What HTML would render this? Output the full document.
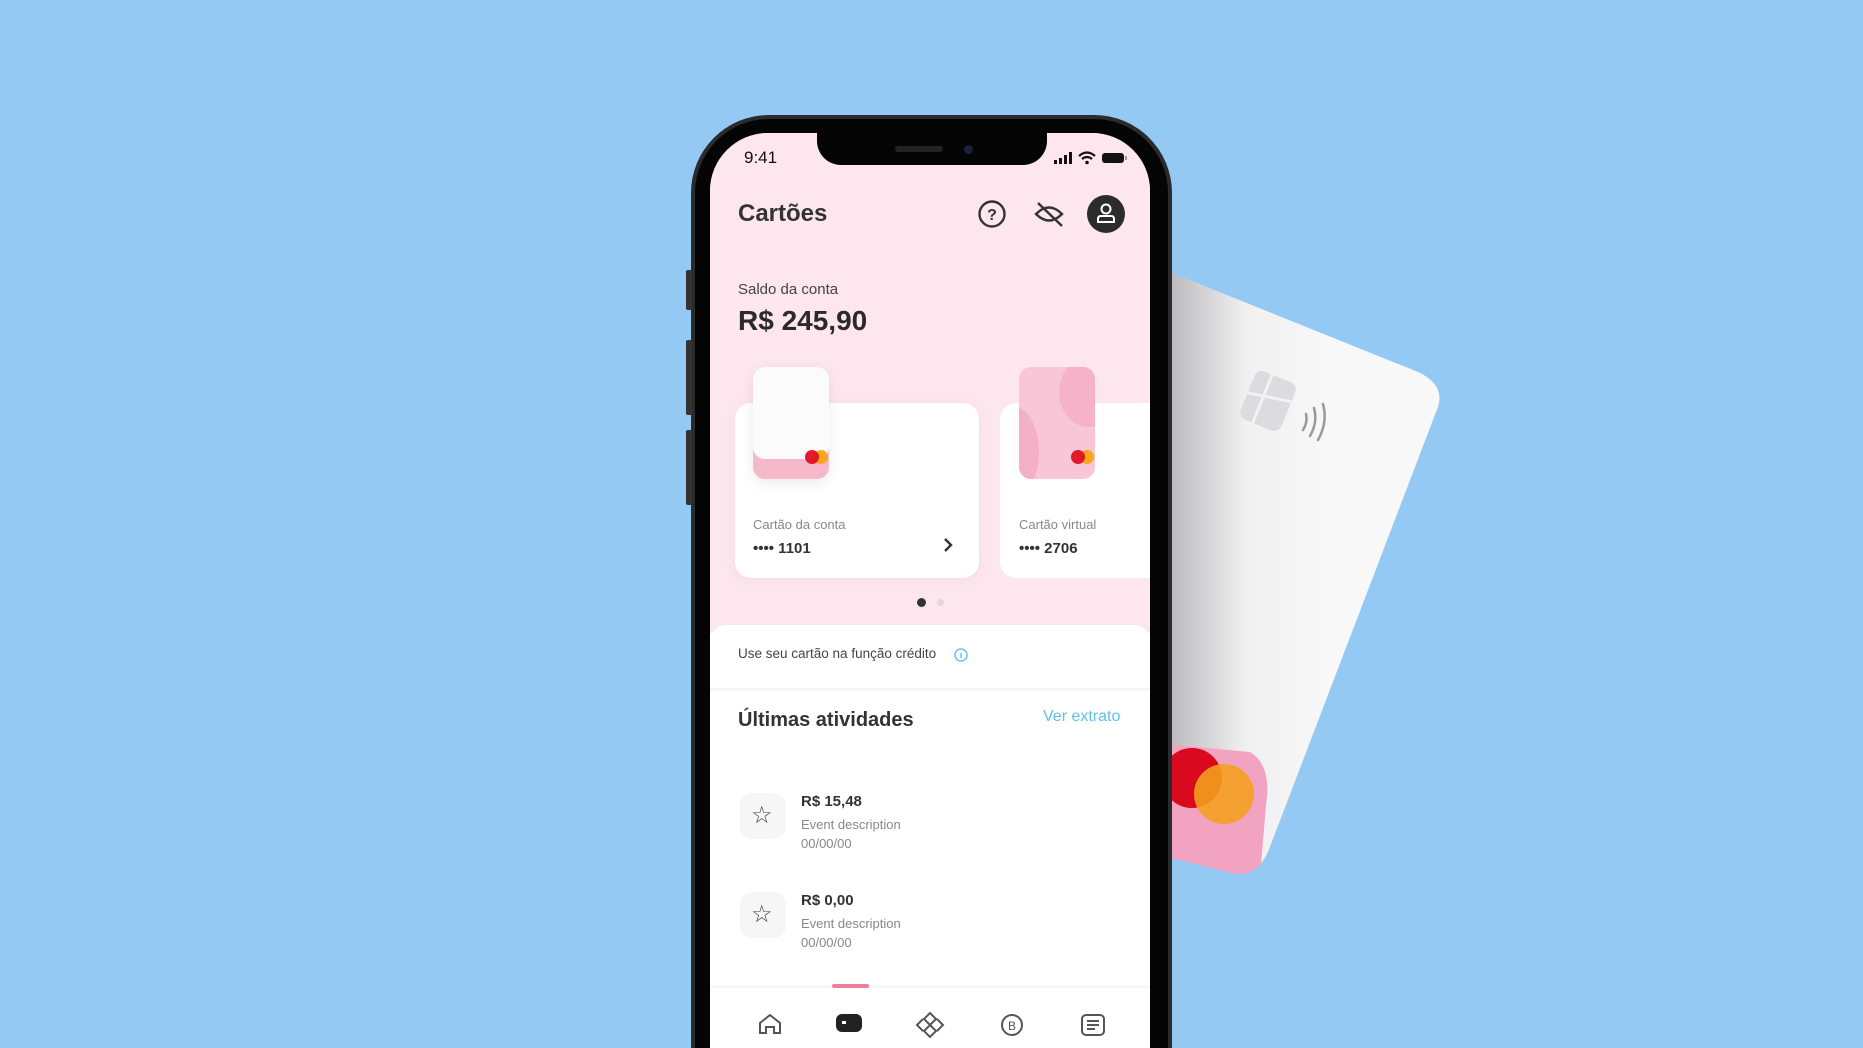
<!DOCTYPE html>
<html><head><meta charset="utf-8"><style>
*{margin:0;padding:0;box-sizing:border-box}
html,body{width:1863px;height:1048px;overflow:hidden}
body{background:#94c9f4;font-family:"Liberation Sans",sans-serif}
#w{position:relative;width:1863px;height:1048px;overflow:hidden;background:#94c9f4}
.abs{position:absolute}
.t{position:absolute;white-space:nowrap}
</style></head><body><div id="w">

<svg class="abs" style="left:0;top:0" width="1863" height="1048">
  <defs>
    <linearGradient id="g1" x1="1160" x2="1330" y1="0" y2="0" gradientUnits="userSpaceOnUse">
      <stop offset="0" stop-color="#b4b4b6"/><stop offset="0.5" stop-color="#f0f0f1"/><stop offset="1" stop-color="#f8f8f9"/>
    </linearGradient>
    <clipPath id="cc"><path d="M1120 252 L1418 372 Q1448 386 1436 412 L1268 852 Q1255 880 1228 872 L1100 840 Z"/></clipPath>
  </defs>
  <path d="M1120 252 L1418 372 Q1448 386 1436 412 L1268 852 Q1255 880 1228 872 L1100 840 Z" fill="url(#g1)"/>
  <g clip-path="url(#cc)">
    <path d="M1100 738 L1250 752 Q1272 765 1266 805 L1258 900 L1100 900 Z" fill="#f3a3c2"/>
    <circle cx="1192" cy="778" r="30" fill="#d90a1f"/>
    <circle cx="1224" cy="794" r="30" fill="#f5a11c" opacity="0.88"/>
  </g>
  <g transform="translate(1268 401) rotate(22)">
    <rect x="-22" y="-26" width="44" height="52" rx="8" fill="#dcdcde"/>
    <path d="M-22 0 L22 -8 M-6 -26 L-6 26" stroke="#f2f2f2" stroke-width="3"/>
  </g>
  <g fill="none" stroke="#999" stroke-width="2.5" stroke-linecap="round">
    <path d="M1303 430 q5 -8 3 -16"/><path d="M1310 436 q8 -14 4 -28"/><path d="M1318 440 q10 -18 5 -36"/>
  </g>
</svg>

<div class="abs" style="left:691px;top:115px;width:481px;height:1100px;border-radius:78px;background:#2b2b2d;"></div>
<div class="abs" style="left:695px;top:119px;width:473px;height:1100px;border-radius:74px;background:#050505;"></div>
<div class="abs" style="left:686px;top:270px;width:6px;height:40px;background:#333;border-radius:2px"></div>
<div class="abs" style="left:686px;top:340px;width:6px;height:75px;background:#333;border-radius:2px"></div>
<div class="abs" style="left:686px;top:430px;width:6px;height:75px;background:#333;border-radius:2px"></div>

<div class="abs" style="left:710px;top:133px;width:440px;height:1100px;border-radius:58px;overflow:hidden;background:#fff">
  <div class="abs" style="left:0;top:0;width:440px;height:500px;background:#fde6ee"></div>
  <div class="abs" style="left:107px;top:-2px;width:230px;height:34px;background:#050505;border-radius:0 0 24px 24px"></div>
  <div class="abs" style="left:185px;top:13px;width:48px;height:6px;background:#222;border-radius:3px"></div>
  <div class="abs" style="left:254px;top:12px;width:9px;height:9px;background:#1a2040;border-radius:50%"></div>
  <div class="t" style="left:34px;top:15px;font-size:17px;color:#111">9:41</div>
  <svg class="abs" style="left:342px;top:17px" width="80" height="16">
    <rect x="2" y="10" width="3" height="4" fill="#111"/><rect x="7" y="8" width="3" height="6" fill="#111"/><rect x="12" y="5" width="3" height="9" fill="#111"/><rect x="17" y="2" width="3" height="12" fill="#111"/>
    <path d="M27 6 q8 -7 16 0 M30 9 q5 -4 10 0" stroke="#111" stroke-width="2.2" fill="none"/><circle cx="35" cy="12.5" r="1.8" fill="#111"/>
    <rect x="50" y="3" width="22" height="10" rx="3" fill="#111"/><rect x="73" y="6" width="2" height="4" fill="#999"/>
  </svg>

  <div class="t" style="left:28px;top:67px;font-size:24px;font-weight:bold;color:#333">Cartões</div>
  <svg class="abs" style="left:268px;top:61px" width="160" height="44">
    <circle cx="14" cy="20" r="12.5" fill="none" stroke="#333" stroke-width="2.4"/>
    <text x="14" y="26" font-size="16" font-weight="bold" text-anchor="middle" fill="#333" font-family="Liberation Sans">?</text>
    <path d="M58 20 q13 -13 26 0 q-13 13 -26 0z" fill="none" stroke="#333" stroke-width="2.4"/>
    <path d="M60 9 L84 32" stroke="#333" stroke-width="2.4"/>
    <circle cx="128" cy="20" r="19" fill="#2c2c2e"/>
    <circle cx="128" cy="15" r="4.5" fill="none" stroke="#fff" stroke-width="2"/>
    <path d="M120 28 v-3 q0 -3 3 -3 h10 q3 0 3 3 v3 z" fill="none" stroke="#fff" stroke-width="2"/>
  </svg>

  <div class="t" style="left:28px;top:148px;font-size:15px;color:#444">Saldo da conta</div>
  <div class="t" style="left:28px;top:172px;font-size:28px;font-weight:bold;color:#2a2a2a">R$ 245,90</div>

  <div class="abs" style="left:25px;top:270px;width:244px;height:175px;background:#fff;border-radius:16px;box-shadow:0 2px 10px rgba(230,180,200,.25)"></div>
  <div class="abs" style="left:43px;top:234px;width:76px;height:112px;border-radius:12px;background:#f6b8cb;box-shadow:0 4px 14px rgba(0,0,0,.08)"></div>
  <div class="abs" style="left:43px;top:234px;width:76px;height:92px;border-radius:12px;background:#fbfbfb"></div>
  <div class="abs" style="left:104px;top:317px;width:14px;height:14px;border-radius:50%;background:#f6a71c"></div>
  <div class="abs" style="left:95px;top:317px;width:14px;height:14px;border-radius:50%;background:#e0101f;opacity:.95"></div>
  <div class="t" style="left:43px;top:384px;font-size:13px;color:#888">Cartão da conta</div>
  <div class="t" style="left:43px;top:407px;font-size:15px;font-weight:bold;color:#333">•••• 1101</div>
  <svg class="abs" style="left:232px;top:404px" width="12" height="16"><path d="M3 2 L9 8 L3 14" stroke="#333" stroke-width="2.4" fill="none"/></svg>

  <div class="abs" style="left:290px;top:270px;width:200px;height:175px;background:#fff;border-radius:16px"></div>
  <div class="abs" style="left:309px;top:234px;width:76px;height:112px;border-radius:12px;background:#f8c6d6;overflow:hidden">
    <div class="abs" style="left:40px;top:-10px;width:60px;height:70px;border-radius:50%;background:#f6b2c8"></div>
    <div class="abs" style="left:-30px;top:40px;width:50px;height:90px;border-radius:50%;background:#f4b0c6"></div>
  </div>
  <div class="abs" style="left:370px;top:317px;width:14px;height:14px;border-radius:50%;background:#f6a71c"></div>
  <div class="abs" style="left:361px;top:317px;width:14px;height:14px;border-radius:50%;background:#e0101f;opacity:.95"></div>
  <div class="t" style="left:309px;top:384px;font-size:13px;color:#888">Cartão virtual</div>
  <div class="t" style="left:309px;top:407px;font-size:15px;font-weight:bold;color:#333">•••• 2706</div>

  <div class="abs" style="left:207px;top:465px;width:9px;height:9px;border-radius:50%;background:#333"></div>
  <div class="abs" style="left:227px;top:466px;width:7px;height:7px;border-radius:50%;background:#e6d6dc"></div>

  <div class="abs" style="left:0;top:492px;width:440px;height:700px;background:#fff;border-radius:16px 16px 0 0"></div>
  <div class="t" style="left:28px;top:513px;font-size:13.5px;color:#444">Use seu cartão na função crédito</div>
  <svg class="abs" style="left:243px;top:514px" width="16" height="16"><circle cx="8" cy="8" r="6" fill="none" stroke="#6cc3ec" stroke-width="1.5"/><path d="M8 6v5" stroke="#6cc3ec" stroke-width="1.5"/></svg>
  <div class="abs" style="left:0;top:555px;width:440px;height:3px;background:#f6f4f5"></div>
  <div class="t" style="left:28px;top:576px;font-size:20px;font-weight:bold;color:#333">Últimas atividades</div>
  <div class="t" style="left:333px;top:575px;font-size:16px;color:#5fc1ec">Ver extrato</div>

  <div class="abs" style="left:30px;top:660px;width:46px;height:46px;border-radius:12px;background:#f6f6f6"></div>
  <div class="t" style="left:41px;top:668px;font-size:24px;color:#444">☆</div>
  <div class="t" style="left:91px;top:660px;font-size:15px;font-weight:bold;color:#333">R$ 15,48</div>
  <div class="t" style="left:91px;top:684px;font-size:13px;color:#888">Event description</div>
  <div class="t" style="left:91px;top:703px;font-size:13px;color:#888">00/00/00</div>

  <div class="abs" style="left:30px;top:759px;width:46px;height:46px;border-radius:12px;background:#f6f6f6"></div>
  <div class="t" style="left:41px;top:767px;font-size:24px;color:#444">☆</div>
  <div class="t" style="left:91px;top:759px;font-size:15px;font-weight:bold;color:#333">R$ 0,00</div>
  <div class="t" style="left:91px;top:783px;font-size:13px;color:#888">Event description</div>
  <div class="t" style="left:91px;top:802px;font-size:13px;color:#888">00/00/00</div>

  <div class="abs" style="left:0;top:852px;width:440px;height:3px;background:#f7f7f7"></div>
  <div class="abs" style="left:122px;top:851px;width:37px;height:4px;border-radius:2px;background:#f07d9c"></div>

  <svg class="abs" style="left:0;top:874px" width="440" height="40" fill="none" stroke="#555" stroke-width="2">
    <path d="M50 26 v-10 l10 -8 l10 8 v10 h-6 v-6 h-8 v6 z"/>
    <rect x="127" y="8" width="24" height="16" rx="5" fill="#222" stroke="#222"/><rect x="132" y="14" width="4" height="3" fill="#fff" stroke="none"/>
    <path d="M220 6 l6 6 l-6 6 l-6 -6z M220 18 l6 6 l-6 6 l-6 -6z M213 12 l-6 6 6 6 M227 12 l6 6 -6 6"/>
    <circle cx="302" cy="18" r="10"/><text x="302" y="23" font-size="12" text-anchor="middle" fill="#555" stroke="none" font-family="Liberation Sans">B</text>
    <rect x="372" y="8" width="22" height="20" rx="4"/><path d="M377 14h12 M377 18h12 M377 22h8"/>
  </svg>
</div>

</div></body></html>
